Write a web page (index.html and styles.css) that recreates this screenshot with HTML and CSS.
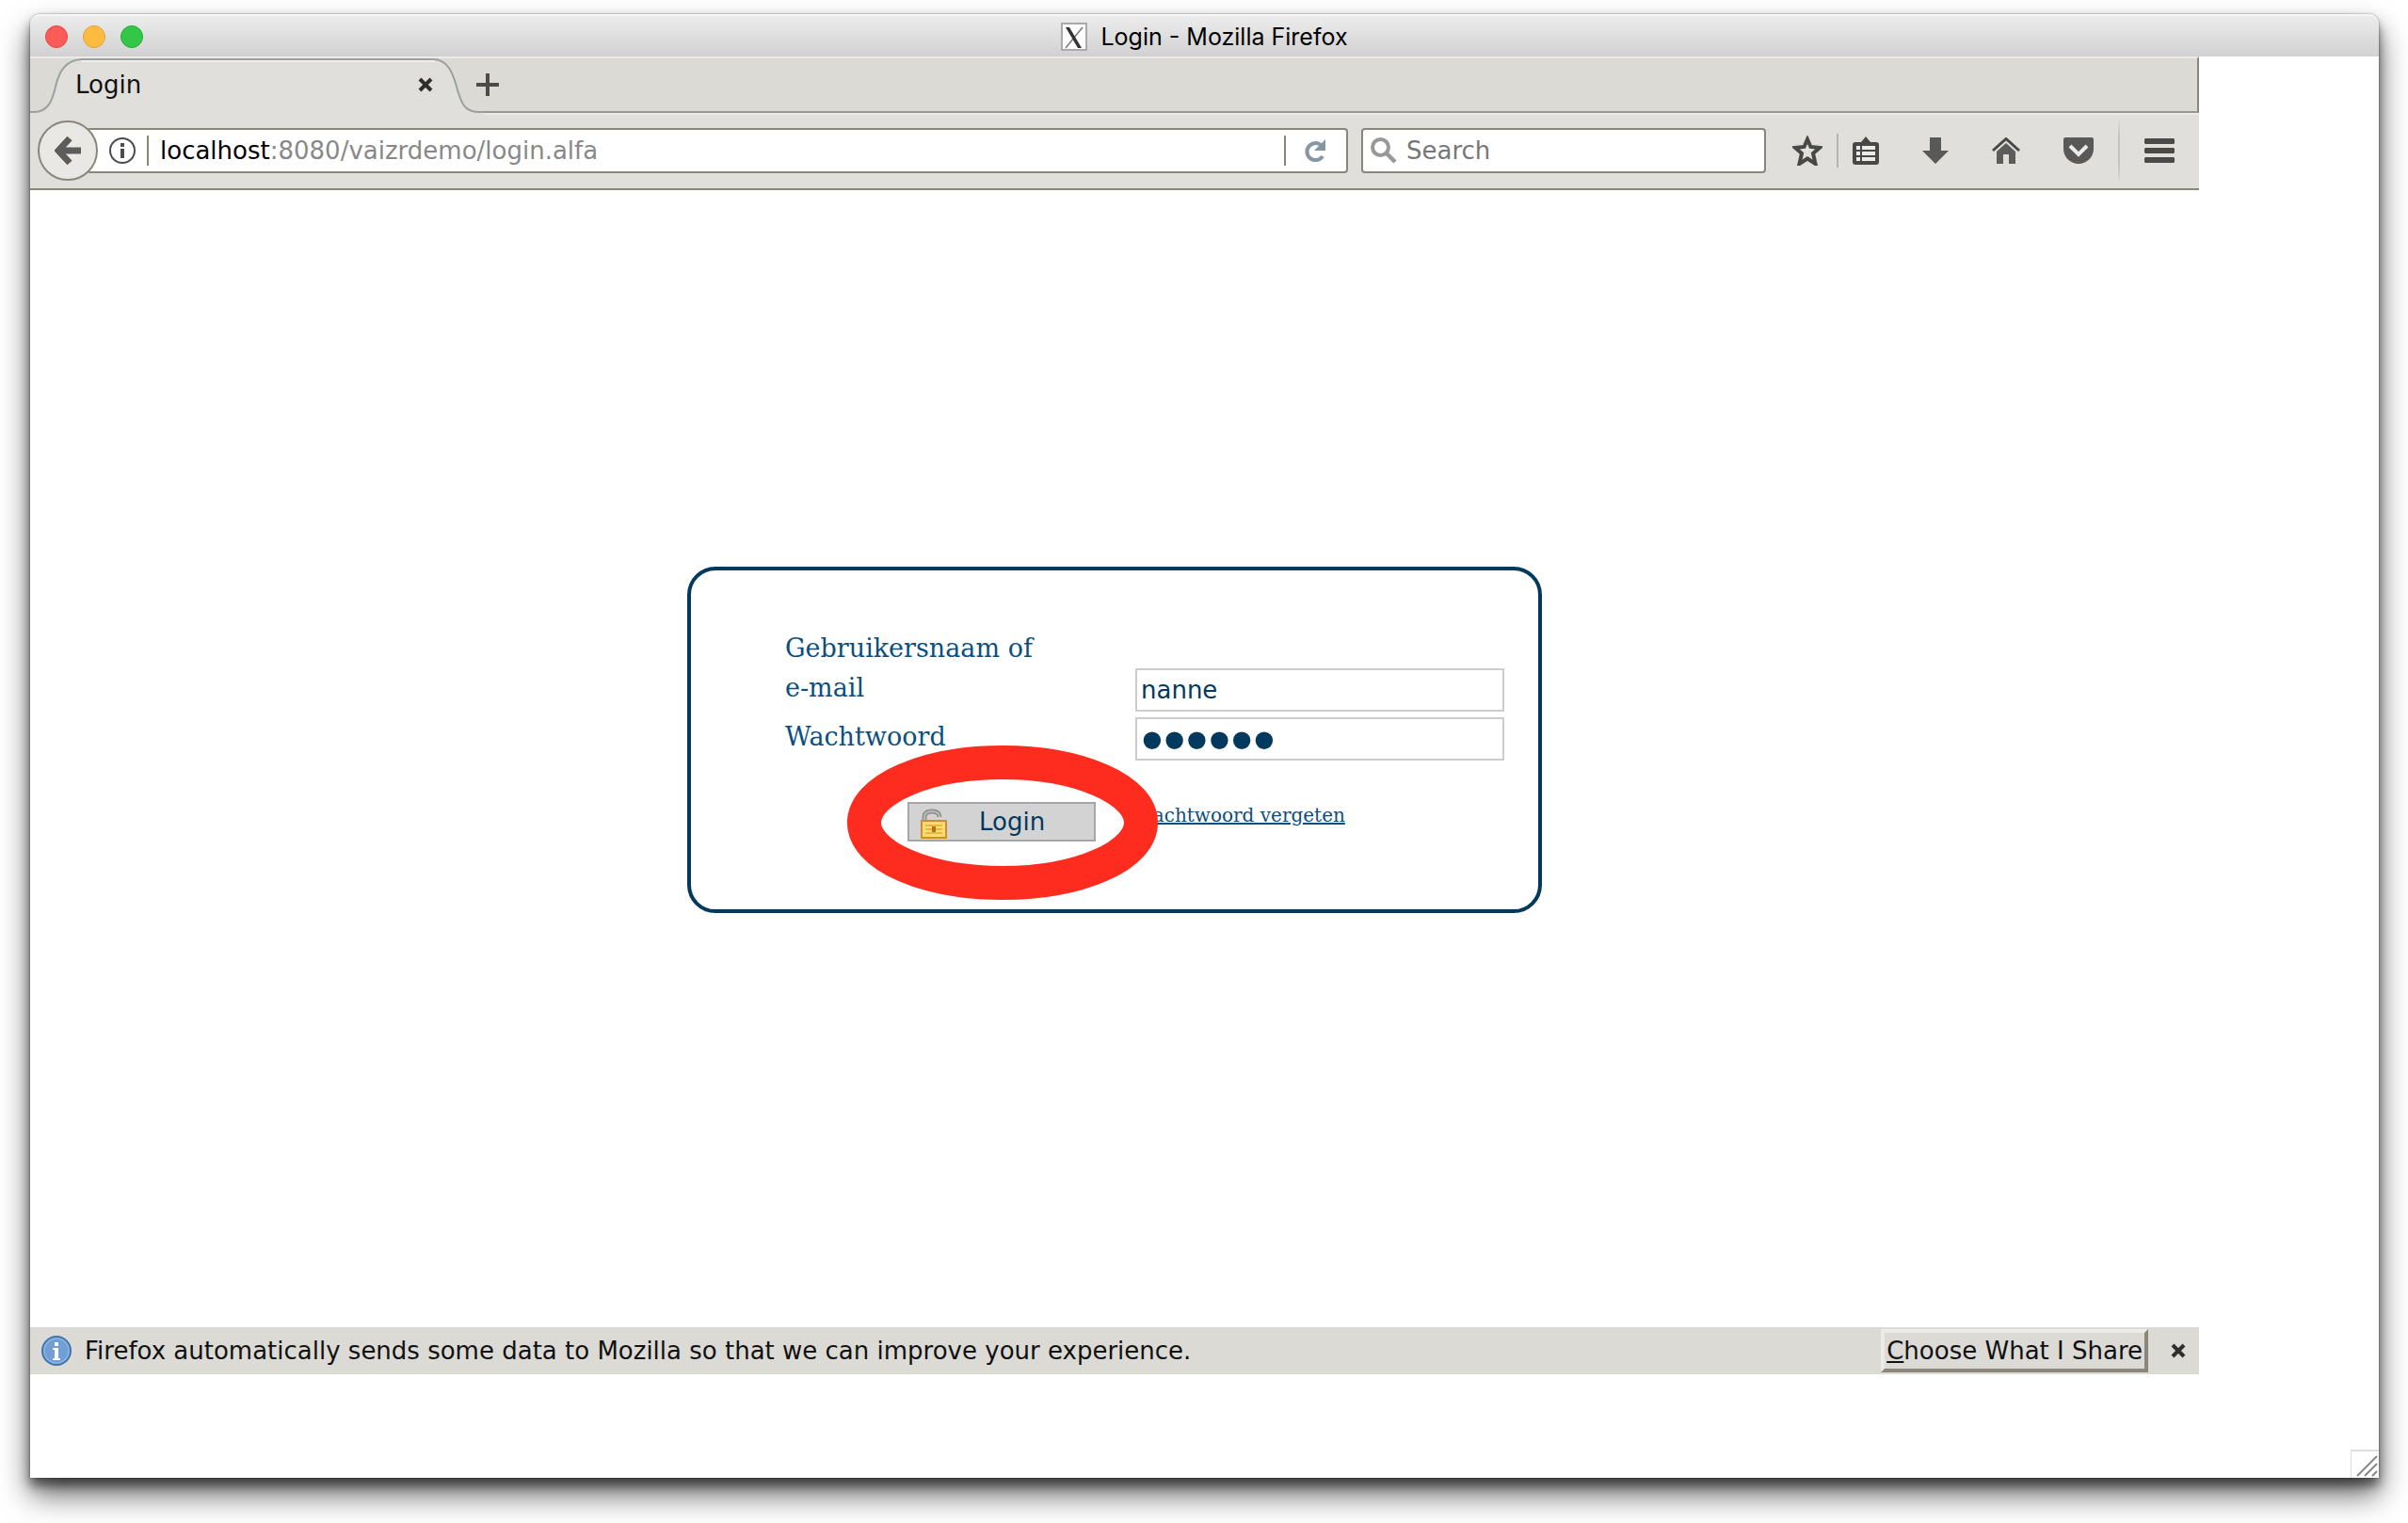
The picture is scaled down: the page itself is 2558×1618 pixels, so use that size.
FILE: index.html
```html
<!DOCTYPE html>
<html lang="nl">
<head>
<meta charset="utf-8">
<title>Login - Mozilla Firefox</title>
<link rel="stylesheet" href="styles.css">
</head>
<body>
<div class="window">
  <header class="titlebar">
    <div class="lights">
      <button class="light light-close" aria-label="Close window"></button>
      <button class="light light-min" aria-label="Minimise window"></button>
      <button class="light light-zoom" aria-label="Zoom window"></button>
    </div>
    <div class="window-title">
      <svg width="28" height="30" viewBox="0 0 28 30" aria-hidden="true"><rect x="1" y="1" width="26" height="28" fill="#fff" stroke="#aaa" stroke-width="2"/><path d="M23 5 5 27" stroke="#777" stroke-width="1.500"/><path d="M5 5h4l13 22h-4z" fill="#333"/></svg>
      <span>Login - Mozilla Firefox</span>
    </div>
  </header>

  <div class="app">
    <div class="tabstrip">
      <div class="tab">
        <svg class="tab-shape" width="482" height="62" viewBox="0 0 482 62" aria-hidden="true"><path d="M0 59H4C20 59 24 45 27 32S36 3 56 3H428C444 3 449 18 453 32S460 59 476 59H482V62H0Z" fill="#e0dfdb"/><path d="M0 59H4C20 59 24 45 27 32S36 3 56 3H428C444 3 449 18 453 32S460 59 476 59H482" fill="none" stroke="#9aa0a2" stroke-width="2"/><path d="M54 5H430" stroke="#efeeeb" stroke-width="2"/></svg>
        <span class="tab-label">Login</span>
        <button class="icon-button tab-close" aria-label="Close tab"><svg width="16" height="16" viewBox="0 0 16 16"><path d="M2 2 14 14M14 2 2 14" stroke="#2e2e2c" stroke-width="4"/></svg></button>
      </div>
      <button class="icon-button new-tab" aria-label="New tab"><svg width="24" height="24" viewBox="0 0 24 24"><path d="M12 0V24M0 12H24" stroke="#4c4c4a" stroke-width="4"/></svg></button>
    </div>

    <div class="toolbar">
      <button class="back" aria-label="Back"><svg width="28" height="32" viewBox="0 0 28 32"><path d="M16 3 4 16 16 29M5 16H28" fill="none" stroke="#5c5c5a" stroke-width="7"/></svg></button>
      <div class="urlbar">
        <svg width="28" height="28" viewBox="0 0 28 28" aria-hidden="true"><circle cx="14" cy="14" r="13" fill="none" stroke="#4d4d4b" stroke-width="2"/><path d="M12 6h4v4h-4zM12 12h4v10h-4z" fill="#4d4d4b"/></svg>
        <span class="divider"></span>
        <div class="url" role="textbox" aria-label="Address" contenteditable="true" spellcheck="false">localhost<span class="url-dim">:8080/vaizrdemo/login.alfa</span></div>
        <span class="divider"></span>
        <button class="icon-button reload" aria-label="Reload"><svg width="22" height="24" viewBox="0 0 22 24"><path d="M19 18A9 9 0 1 1 17 6" fill="none" stroke="#8796a4" stroke-width="4"/><path d="M22 0V12H10Z" fill="#8796a4"/></svg></button>
      </div>
      <div class="searchbar">
        <svg width="28" height="28" viewBox="0 0 28 28" aria-hidden="true"><circle cx="10.500" cy="10.500" r="8.500" fill="none" stroke="#989898" stroke-width="4"/><path d="M16 16 26 26" stroke="#989898" stroke-width="4.500"/></svg>
        <input class="search-input" type="text" placeholder="Search" aria-label="Search">
      </div>
      <nav class="tools" aria-label="Toolbar">
        <button class="icon-button" aria-label="Bookmark this page"><svg width="32" height="32" viewBox="0 0 32 32"><path d="M16 4 19.500 12 29 13 22 19 24.500 30 16 24.500 7.500 30 10 19 3 13 12.500 12Z" fill="none" stroke="#484846" stroke-width="4"/></svg></button>
        <span class="tool-divider"></span>
        <button class="icon-button" aria-label="Bookmarks menu"><svg width="28" height="30" viewBox="0 0 28 30"><path d="M3 6H9L14 0 19 6H25Q28 6 28 9V27Q28 30 25 30H3Q0 30 0 27V9Q0 6 3 6Z" fill="#484846"/><path d="M4 10h4v4H4zM10 10h14v4H10zM4 16h4v4H4zM10 16h14v4H10zM4 22h4v4H4zM10 22h14v4H10z" fill="#ecebe8"/></svg></button>
        <button class="icon-button" aria-label="Downloads"><svg width="28" height="28" viewBox="0 0 28 28"><path d="M8 0H20V14H28L14 28 0 14H8Z" fill="#595957"/></svg></button>
        <button class="icon-button" aria-label="Home"><svg width="30" height="28" viewBox="0 0 30 28"><path d="M1 14 15 1.500 29 14" fill="none" stroke="#484846" stroke-width="3"/><path d="M5 15 15 6 25 15V28H18V18H12V28H5Z" fill="#5c5c5a"/></svg></button>
        <button class="icon-button" aria-label="Save to Pocket"><svg width="32" height="28" viewBox="0 0 32 28"><path d="M2 0H30Q32 0 32 2V12A16 16 0 0 1 0 12V2Q0 0 2 0Z" fill="#595957"/><path d="M7 9 16 18 25 9" fill="none" stroke="#ecebe8" stroke-width="4"/></svg></button>
        <span class="menu-divider"></span>
        <button class="icon-button" aria-label="Open menu"><svg width="32" height="26" viewBox="0 0 32 26"><path d="M1 0h30l1 1v4l-1 1H1L0 5V1zM1 10h30l1 1v4l-1 1H1l-1-1v-4zM1 20h30l1 1v4l-1 1H1l-1-1v-4z" fill="#4a4a48"/></svg></button>
      </nav>
    </div>

    <main class="page">
      <form class="login">
        <label class="label" for="user">Gebruikersnaam of<br>e-mail</label>
        <input class="field" id="user" type="text" value="nanne">
        <label class="label" for="pass">Wachtwoord</label>
        <input class="field field-pass" id="pass" type="password" value="geheim">
        <div class="submit-cell">
          <button class="submit" type="button">
            <svg width="28" height="32" viewBox="0 0 28 32" aria-hidden="true"><path d="M4 13V9Q4 3 12 3T20 9" fill="none" stroke="#909090" stroke-width="5"/><path d="M4 13V9Q4 3 12 3T20 9" fill="none" stroke="#c4c4c4" stroke-width="1.500"/><rect x="1" y="13" width="26" height="18" fill="#fbdc78" stroke="#d98a26" stroke-width="2"/><path d="M5 18h18M5 22h18M5 26h18" stroke="#e8b73e" stroke-width="2"/><rect x="12" y="19" width="4" height="6" fill="#a87428"/></svg>
            <span>Login</span>
          </button>
          <svg class="highlight" width="330" height="164" viewBox="0 0 330 164" aria-hidden="true"><ellipse cx="165" cy="82" rx="147" ry="64" fill="none" stroke="#fd2c1f" stroke-width="36"/></svg>
        </div>
        <a class="forgot" href="#">Wachtwoord vergeten</a>
      </form>
    </main>

    <aside class="notice">
      <svg width="32" height="32" viewBox="0 0 32 32" aria-hidden="true"><circle cx="16" cy="16" r="15" fill="#6f9fd4" stroke="#4573ad" stroke-width="2"/><circle cx="16" cy="16" r="13" fill="none" stroke="#8db4e0" stroke-width="1.500"/><path d="M14 7h4v4h-4zM12 13h6v11h2v2h-8v-2h2v-9h-2z" fill="#fff"/></svg>
      <p class="notice-text">Firefox automatically sends some data to Mozilla so that we can improve your experience.</p>
      <button class="choose"><u>C</u>hoose What I Share</button>
      <button class="icon-button" aria-label="Dismiss"><svg width="16" height="16" viewBox="0 0 16 16"><path d="M2 2 14 14M14 2 2 14" stroke="#2e2e2c" stroke-width="4"/></svg></button>
    </aside>
  </div>
  <svg class="grip" width="30" height="30" viewBox="0 0 30 30" aria-hidden="true"><path d="M0 30V1H30" fill="none" stroke="#dedede" stroke-width="2"/><path d="M7 28 28 7M15 28 28 15M23 28 28 23" stroke="#888" stroke-width="2"/></svg>
</div>
</body>
</html>
```
FILE: styles.css
```css
* { box-sizing: border-box; }

body {
  margin: 0;
  background: #fff;
  color: #111;
  font: 26px/32px "DejaVu Sans", sans-serif;
  overflow: hidden;
}

button, input { font: inherit; color: inherit; }

svg { display: block; flex: none; }

.window {
  position: relative;
  display: flex;
  flex-direction: column;
  min-height: calc(100vh - 63px);
  margin: 15px 31px 48px 32px;
  background: #fff;
  border-radius: 10px 10px 0 0;
  box-shadow: 0 0 2px rgba(0, 0, 0, .5), 0 18px 32px rgba(0, 0, 0, .6), 0 8px 12px rgba(0, 0, 0, .5);
}

/* Title bar */
.titlebar {
  display: grid;
  grid-template-columns: 1fr auto 1fr;
  align-items: center;
  height: 45px;
  padding: 0 16px;
  background: linear-gradient(#ececec, #d1d1d1);
  border-top: 2px solid #f6f6f6;
  border-radius: 10px 10px 0 0;
}

.lights { display: flex; gap: 16px; }

.light {
  width: 24px;
  height: 24px;
  padding: 0;
  border: 1px solid;
  border-radius: 50%;
}

.light-close { background: #fc5b57; border-color: #e2443f; }
.light-min { background: #fdbc40; border-color: #e0a032; }
.light-zoom { background: #33c748; border-color: #24a934; }

.window-title {
  display: flex;
  align-items: center;
  gap: 14px;
  color: #000;
  font-family: Inter, sans-serif;
  font-size: 25px;
}

/* Browser */
.app {
  display: flex;
  flex: 1;
  flex-direction: column;
  margin: 0 191px 110px 0;
}

.icon-button {
  display: block;
  padding: 0;
  border: 0;
  background: none;
}

.tabstrip {
  display: flex;
  align-items: center;
  height: 60px;
  background: #dbdad5;
  border-top: 2px solid #ecebe8;
  border-right: 2px solid #8a867c;
  border-bottom: 2px solid #989891;
}

.tab {
  position: relative;
  display: flex;
  align-items: center;
  justify-content: space-between;
  width: 474px;
  height: 56px;
  padding: 0 46px 0 48px;
}

.tab-shape { position: absolute; top: -2px; left: 0; }
.tab-label, .tab-close { position: relative; }

.toolbar {
  display: flex;
  align-items: center;
  height: 82px;
  padding: 0 26px 2px 8px;
  background: #e0dfdb;
  border-top: 2px solid #ecebe8;
  border-bottom: 2px solid #8a867c;
}

.back {
  display: grid;
  place-items: center;
  z-index: 1;
  width: 64px;
  height: 64px;
  margin-right: -12px;
  padding: 0;
  border: 2px solid #8a867c;
  border-radius: 50%;
  background: #e9e8e4;
}

.urlbar, .searchbar {
  display: flex;
  align-items: center;
  height: 48px;
  background: #fff;
  border: 2px solid #8a867c;
  border-radius: 4px;
}

.urlbar {
  flex: 1;
  gap: 12px;
  margin-right: 14px;
  padding: 0 22px;
}

.divider { width: 2px; height: 32px; background: #8a867c; }
.url { flex: 1; color: #000; outline: 0; }
.url-dim { color: #888; }
.reload { margin-left: 8px; }

.searchbar { gap: 10px; width: 430px; padding: 0 8px; }

.search-input {
  flex: 1;
  min-width: 0;
  padding: 0;
  border: 0;
  outline: 0;
  background: none;
}

.search-input::placeholder { color: #777; opacity: 1; }

.tools {
  display: flex;
  align-items: center;
  gap: 46px;
  margin-left: 28px;
}

.tool-divider {
  width: 2px;
  height: 36px;
  margin: 0 -31px;
  background: #b5b4af;
}

.menu-divider {
  width: 2px;
  height: 72px;
  margin: 0 -20px;
  background: linear-gradient(transparent, #c4c3be 30%, #c4c3be 70%, transparent);
}

/* Login page */
.page {
  display: flex;
  flex: 1;
  align-items: flex-start;
  justify-content: center;
  padding-top: 400px;
}

.login {
  display: grid;
  grid-template-columns: 372px 392px;
  row-gap: 6px;
  align-items: end;
  padding: 62px 36px 72px 100px;
  border: 4px solid #04395e;
  border-radius: 30px;
  color: #0b4f80;
}

.label {
  padding-bottom: 4px;
  font-family: "DejaVu Serif", serif;
  font-size: 27px;
  line-height: 42px;
}

.field {
  width: 100%;
  height: 46px;
  padding: 0 4px;
  border: 2px solid #ccc;
  outline: 0;
  background: #fff;
  color: #04395e;
}

.field-pass { font: 68px/40px "Liberation Sans", sans-serif; }

.submit-cell {
  position: relative;
  margin-top: 38px;
  padding-left: 130px;
}

.submit {
  display: flex;
  align-items: center;
  width: 200px;
  height: 42px;
  gap: 34px;
  padding: 4px 12px 0;
  border: 2px solid #a6a6a6;
  background: #d3d3d3;
  color: #04395e;
}

.submit span { margin-top: -4px; }

.highlight {
  position: absolute;
  top: -60px;
  left: 66px;
  pointer-events: none;
}

.forgot {
  align-self: start;
  margin-top: 38px;
  color: #0b4f80;
  font: 20px/28px "DejaVu Serif", serif;
}

/* Notification bar */
.notice {
  display: flex;
  align-items: center;
  height: 50px;
  padding: 0 14px 0 12px;
  background: #dbdad5;
}

.notice-text { flex: 1; margin: 0 0 0 14px; }

.choose {
  height: 46px;
  margin-right: 24px;
  padding: 0 2px;
  border: 4px solid;
  border-color: #ecebe8 #8a867c #8a867c #ecebe8;
  background: #dbdad5;
}

.grip { position: absolute; right: 0; bottom: 0; }
```
